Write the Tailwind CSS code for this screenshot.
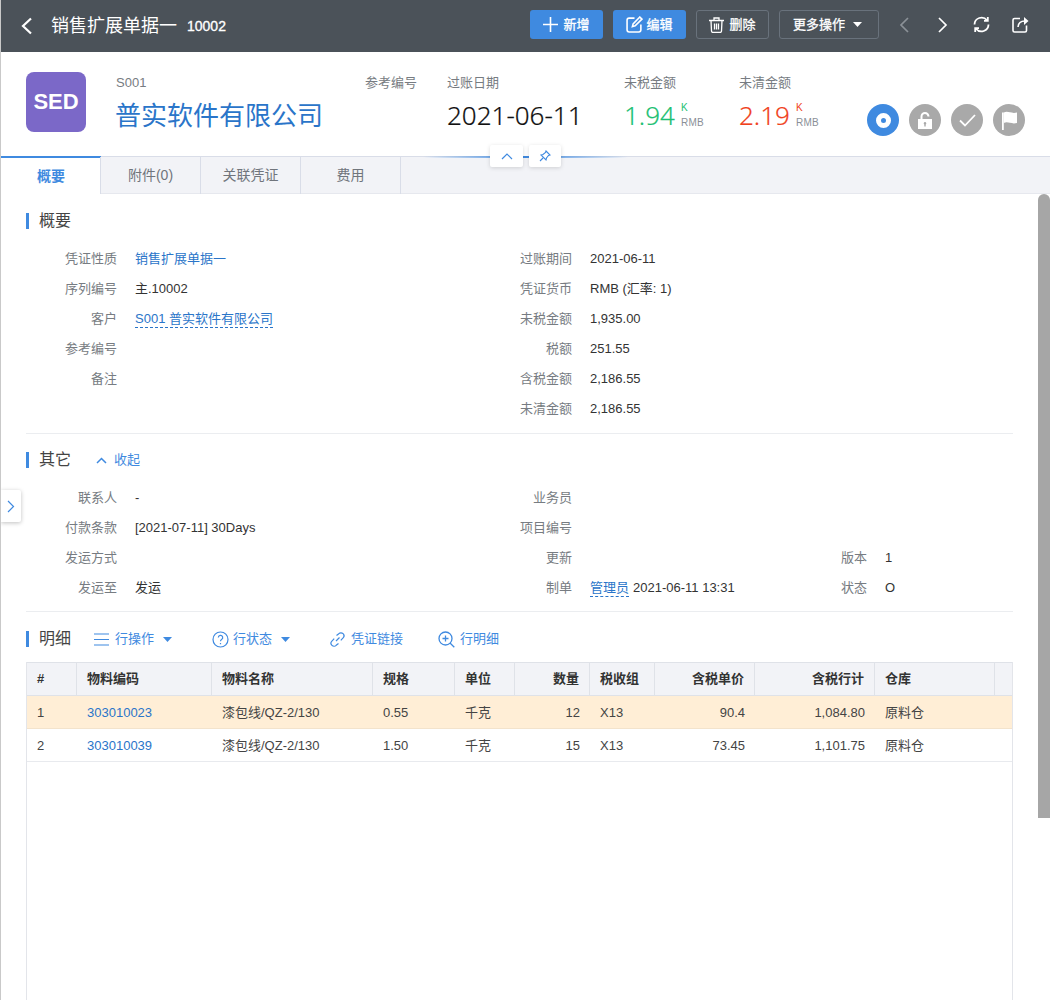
<!DOCTYPE html>
<html lang="zh">
<head>
<meta charset="utf-8">
<script src="https://cdn.jsdelivr.net/npm/@tailwindcss/browser@4"></script>
<title>销售扩展单据一</title>
</head>
<body class="m-0">
<div class="relative w-[1050px] h-[1000px] overflow-hidden bg-white border-l border-[#c9c9c9] text-[13px] text-[#333] font-['Liberation_Sans','Noto_Sans_CJK_SC',sans-serif]">

  <!-- Top bar -->
  <header class="h-[52px] bg-[#4b5259] flex items-center text-white">
    <svg class="ml-[19px] w-[12px] h-[18px]" viewBox="0 0 12 18" fill="none" stroke="#fff" stroke-width="2.200"><path d="M11 1.500 3 9l8 7.500"/></svg>
    <span class="ml-[19px] text-[18px] leading-none">销售扩展单据一</span>
    <span class="ml-[10px] text-[14px] [-webkit-text-stroke:0.3px_white]">10002</span>
    <div class="ml-auto flex items-center pb-[3px]">
      <button class="w-[73px] h-[29px] rounded-[3px] bg-[#3f8ae0] flex items-center justify-center gap-[5px] text-[13px] [-webkit-text-stroke:0.3px_white]">
        <svg class="w-[15px] h-[15px]" viewBox="0 0 15 15" stroke="#fff" stroke-width="1.600"><path d="M7.500 0v15M0 7.500h15"/></svg>新增</button>
      <button class="ml-[10px] w-[73px] h-[29px] rounded-[3px] bg-[#3f8ae0] flex items-center justify-center gap-[3px] text-[13px] [-webkit-text-stroke:0.3px_white]">
        <svg class="w-[17px] h-[17px]" viewBox="0 0 16 16" fill="none" stroke="#fff" stroke-width="1.500"><path d="M8 2H3a2 2 0 0 0-2 2v9a2 2 0 0 0 2 2h9a2 2 0 0 0 2-2V8"/><path d="M6 10l.7-2.600L13 1l2 2-6.400 6.300z"/></svg>编辑</button>
      <button class="ml-[10px] w-[73px] h-[29px] rounded-[3px] border border-[#69727c] flex items-center justify-center gap-[5px] text-[13px] [-webkit-text-stroke:0.3px_white]">
        <svg class="w-[15px] h-[16px]" viewBox="0 0 15 16" fill="none" stroke="#fff" stroke-width="1.300"><path d="M0 3.500h15M5 3.500V1h5v2.500M2 3.500l.5 10.500a1.500 1.500 0 0 0 1.500 1.500h7a1.500 1.500 0 0 0 1.500-1.500L13 3.500M5.500 6.500v6M7.500 6.500v6M9.500 6.500v6"/></svg>删除</button>
      <button class="ml-[10px] w-[100px] h-[29px] rounded-[3px] border border-[#69727c] flex items-center justify-center gap-[8px] pr-[3px] text-[13px] [-webkit-text-stroke:0.3px_white]">更多操作
        <svg class="w-[9px] h-[5px]" viewBox="0 0 9 5" fill="#fff"><path d="M0 0h9L4.500 5z"/></svg></button>
      <svg class="ml-[20px] w-[10px] h-[16px]" viewBox="0 0 10 16" fill="none" stroke="#8b9197" stroke-width="1.700"><path d="M9 1 2 8l7 7"/></svg>
      <svg class="ml-[29px] w-[10px] h-[16px]" viewBox="0 0 10 16" fill="none" stroke="#fff" stroke-width="1.700"><path d="m1 1 7 7-7 7"/></svg>
      <svg class="ml-[25px] w-[17px] h-[17px]" viewBox="0 0 17 17" fill="none" stroke="#fff" stroke-width="1.800"><path d="M1.500 8.500A7 7 0 0 1 14 4.300"/><path d="M15.500 8.500A7 7 0 0 1 3 12.700"/><path d="M14.800 1v3.800H11M2.200 16v-3.800H6"/></svg>
      <svg class="ml-[22px] mr-[21px] w-[17px] h-[17px]" viewBox="0 0 17 17" fill="none" stroke="#fff" stroke-width="1.600"><path d="M8 2.500H2.500a1.500 1.500 0 0 0-1.500 1.500v10.500a1.500 1.500 0 0 0 1.500 1.500h10.500a1.500 1.500 0 0 0 1.500-1.500V9.500"/><path d="M6 11c.3-3.600 3-6 7-6" /><path d="M16.500 5 12 1v8z" fill="#fff" stroke="none"/></svg>
    </div>
  </header>

  <!-- Document summary -->
  <section class="h-[104px] flex items-start">
    <div class="ml-[25px] mt-[20px] w-[60px] h-[60px] rounded-[8px] bg-[#7b68c8] flex items-center justify-center text-white text-[22px] font-bold pb-[2px]">SED</div>
    <div class="ml-[30px] mt-[23px] w-[249px]">
      <div class="text-[13px] leading-[15px] text-[#777c82]">S001</div>
      <div class="-ml-px mt-[8px] text-[26px] leading-[36px] text-[#2a75c9] whitespace-nowrap">普实软件有限公司</div>
    </div>
    <div class="mt-[23px] w-[82px] text-[13px] leading-[15px] text-[#777c82]">参考编号</div>
    <div class="mt-[23px] w-[177px]">
      <div class="text-[13px] leading-[15px] text-[#777c82]">过账日期</div>
      <div class="mt-[7px] text-[26px] leading-[36px] text-[#111] font-['Noto_Sans','Noto_Sans_CJK_SC',sans-serif] font-light [-webkit-text-stroke:0.2px_#111]">2021-06-11</div>
    </div>
    <div class="mt-[23px] w-[115px]">
      <div class="text-[13px] leading-[15px] text-[#777c82]">未税金额</div>
      <div class="mt-[7px] flex items-start">
        <span class="text-[26px] leading-[36px] text-[#1dbf73] font-['Noto_Sans',sans-serif] font-light [-webkit-text-stroke:0.2px_#1dbf73]">1.94</span>
        <span class="ml-[6px] mt-[3px] text-[10px] leading-[15px] text-[#1dbf73]">K<br><span class="text-[#8a9097] tracking-[0.3px]">RMB</span></span>
      </div>
    </div>
    <div class="mt-[23px] w-[128px]">
      <div class="text-[13px] leading-[15px] text-[#777c82]">未清金额</div>
      <div class="mt-[7px] flex items-start">
        <span class="text-[26px] leading-[36px] text-[#f0421c] font-['Noto_Sans',sans-serif] font-light [-webkit-text-stroke:0.2px_#f0421c]">2.19</span>
        <span class="ml-[6px] mt-[3px] text-[10px] leading-[15px] text-[#f0421c]">K<br><span class="text-[#8a9097] tracking-[0.3px]">RMB</span></span>
      </div>
    </div>
    <div class="mt-[52px] flex gap-[10px]">
      <div class="w-[32px] h-[32px] rounded-full bg-[#3f8ae0] flex items-center justify-center"><span class="w-[15px] h-[15px] rounded-full border-[5px] border-white"></span></div>
      <div class="w-[32px] h-[32px] rounded-full bg-[#a9a9a9] flex items-center justify-center">
        <svg class="w-[14px] h-[17px]" viewBox="0 0 14 17" fill="#fff"><path fill-rule="evenodd" d="M0 7h14v10H0zM7 10a1.300 1.300 0 0 0-.7 2.400V14.500h1.400v-2.100A1.300 1.300 0 0 0 7 10z"/><path d="M2.500 7V4.500a4.500 4.500 0 0 1 9 0h-2a2.500 2.500 0 0 0-5 0V7z"/></svg></div>
      <div class="w-[32px] h-[32px] rounded-full bg-[#a9a9a9] flex items-center justify-center">
        <svg class="w-[17px] h-[13px]" viewBox="0 0 17 13" fill="none" stroke="#fff" stroke-width="1.800"><path d="m1 6.500 5 5L16 1"/></svg></div>
      <div class="w-[32px] h-[32px] rounded-full bg-[#a9a9a9] flex items-center justify-center">
        <svg class="w-[17px] h-[19px]" viewBox="0 0 17 19" fill="#fff"><path d="M1 1.500h1.800V19H1z"/><path d="M2.800 1.500C7 -.5 10 3 16 1.500v10.500c-6 1.500-9-2-13.200 0z"/></svg></div>
    </div>
  </section>

  <!-- Tabs -->
  <nav class="h-[38px] bg-[#f2f3f7] border-t border-[#d9dde8] flex text-[14px] text-[#70757c] shadow-[inset_0_-1px_0_#e6e8ee]">
    <div class="w-[100px] -mt-px h-[38px] bg-white border-t-2 border-[#3f8ae0] flex items-center justify-center font-bold text-[#3f8ae0]">概要</div>
    <div class="w-[101px] -ml-px border-r border-l border-[#d9dde8] flex items-center justify-center">附件(0)</div>
    <div class="w-[100px] border-r border-[#d9dde8] flex items-center justify-center">关联凭证</div>
    <div class="w-[100px] border-r border-[#d9dde8] flex items-center justify-center">费用</div>
  </nav>

  <!-- Body -->
  <main class="pl-[25px] w-[1012px]">
    <h2 class="mt-[19px] h-[16px] border-l-[3px] border-[#3f8ae0] pl-[10px] flex items-center text-[16px] font-normal text-[#444]">概要</h2>
    <div class="mt-[15px] grid grid-cols-[455px_1fr] border-b border-[#ebedf0] h-[190px]">
      <div>
        <div class="h-[30px] flex items-center"><span class="w-[91px] text-right text-[#777c82]">凭证性质</span><span class="ml-[18px] text-[#2a75c9]">销售扩展单据一</span></div>
        <div class="h-[30px] flex items-center"><span class="w-[91px] text-right text-[#777c82]">序列编号</span><span class="ml-[18px]">主.10002</span></div>
        <div class="h-[30px] flex items-center"><span class="w-[91px] text-right text-[#777c82]">客户</span><span class="ml-[18px] text-[#2a75c9] border-b border-dashed border-[#2a75c9] leading-[16px]">S001 普实软件有限公司</span></div>
        <div class="h-[30px] flex items-center"><span class="w-[91px] text-right text-[#777c82]">参考编号</span></div>
        <div class="h-[30px] flex items-center"><span class="w-[91px] text-right text-[#777c82]">备注</span></div>
      </div>
      <div>
        <div class="h-[30px] flex items-center"><span class="w-[91px] text-right text-[#777c82]">过账期间</span><span class="ml-[18px]">2021-06-11</span></div>
        <div class="h-[30px] flex items-center"><span class="w-[91px] text-right text-[#777c82]">凭证货币</span><span class="ml-[18px]">RMB (汇率: 1)</span></div>
        <div class="h-[30px] flex items-center"><span class="w-[91px] text-right text-[#777c82]">未税金额</span><span class="ml-[18px]">1,935.00</span></div>
        <div class="h-[30px] flex items-center"><span class="w-[91px] text-right text-[#777c82]">税额</span><span class="ml-[18px]">251.55</span></div>
        <div class="h-[30px] flex items-center"><span class="w-[91px] text-right text-[#777c82]">含税金额</span><span class="ml-[18px]">2,186.55</span></div>
        <div class="h-[30px] flex items-center"><span class="w-[91px] text-right text-[#777c82]">未清金额</span><span class="ml-[18px]">2,186.55</span></div>
      </div>
    </div>

    <div class="mt-[18px] h-[16px] flex items-center">
      <h2 class="border-l-[3px] border-[#3f8ae0] pl-[10px] h-[16px] flex items-center text-[16px] font-normal text-[#444]">其它</h2>
      <svg class="ml-[25px] w-[11px] h-[7px]" viewBox="0 0 11 7" fill="none" stroke="#3f8ae0" stroke-width="1.500"><path d="m1 6 4.500-4.500L10 6"/></svg>
      <span class="ml-[7px] text-[#3f8ae0]">收起</span>
    </div>
    <div class="mt-[15px] grid grid-cols-[455px_295px_1fr] h-[129px] border-b border-[#ebedf0]">
      <div>
        <div class="h-[30px] flex items-center"><span class="w-[91px] text-right text-[#777c82]">联系人</span><span class="ml-[18px]">-</span></div>
        <div class="h-[30px] flex items-center"><span class="w-[91px] text-right text-[#777c82]">付款条款</span><span class="ml-[18px]">[2021-07-11] 30Days</span></div>
        <div class="h-[30px] flex items-center"><span class="w-[91px] text-right text-[#777c82]">发运方式</span></div>
        <div class="h-[30px] flex items-center"><span class="w-[91px] text-right text-[#777c82]">发运至</span><span class="ml-[18px]">发运</span></div>
      </div>
      <div>
        <div class="h-[30px] flex items-center"><span class="w-[91px] text-right text-[#777c82]">业务员</span></div>
        <div class="h-[30px] flex items-center"><span class="w-[91px] text-right text-[#777c82]">项目编号</span></div>
        <div class="h-[30px] flex items-center"><span class="w-[91px] text-right text-[#777c82]">更新</span></div>
        <div class="h-[30px] flex items-center"><span class="w-[91px] text-right text-[#777c82]">制单</span><span class="ml-[18px] text-[#2a75c9] border-b border-dashed border-[#2a75c9] leading-[16px]">管理员</span><span class="ml-[4px]">2021-06-11 13:31</span></div>
      </div>
      <div>
        <div class="h-[60px]"></div>
        <div class="h-[30px] flex items-center"><span class="w-[91px] text-right text-[#777c82]">版本</span><span class="ml-[18px]">1</span></div>
        <div class="h-[30px] flex items-center"><span class="w-[91px] text-right text-[#777c82]">状态</span><span class="ml-[18px]">O</span></div>
      </div>
    </div>

    <div class="mt-[19px] h-[16px] flex items-center text-[#3f8ae0]">
      <h2 class="border-l-[3px] border-[#3f8ae0] pl-[10px] h-[16px] flex items-center text-[16px] font-normal text-[#444]">明细</h2>
      <svg class="ml-[23px] w-[15px] h-[13px]" viewBox="0 0 15 13" stroke="#3f8ae0" stroke-width="1.200"><path d="M0 1h15M0 6.500h15M0 12h15"/></svg>
      <span class="ml-[6px]">行操作</span>
      <svg class="ml-[9px] w-[9px] h-[5px]" viewBox="0 0 9 5" fill="#3f8ae0"><path d="M0 0h9L4.500 5z"/></svg>
      <svg class="ml-[40px] w-[17px] h-[17px]" viewBox="0 0 17 17" fill="none" stroke="#3f8ae0" stroke-width="1.200"><circle cx="8.500" cy="8.500" r="7.500"/><path d="M6.300 6.500a2.200 2.200 0 1 1 3.300 1.900c-.8.500-1.100.9-1.100 1.900M8.500 12v1.300"/></svg>
      <span class="ml-[4px]">行状态</span>
      <svg class="ml-[9px] w-[9px] h-[5px]" viewBox="0 0 9 5" fill="#3f8ae0"><path d="M0 0h9L4.500 5z"/></svg>
      <svg class="ml-[40px] w-[15px] h-[15px]" viewBox="0 0 15 15" fill="none" stroke="#3f8ae0" stroke-width="1.200"><path d="M6 9l3.500-3.500M6.500 3.500 8.800 1.700a2.900 2.900 0 0 1 4.300 4.200l-2.300 2.400M8.500 11.500l-2.300 1.800a2.900 2.900 0 0 1-4.300-4.200l2.300-2.400"/></svg>
      <span class="ml-[6px]">凭证链接</span>
      <svg class="ml-[35px] w-[17px] h-[17px]" viewBox="0 0 17 17" fill="none" stroke="#3f8ae0" stroke-width="1.300"><circle cx="7.500" cy="7.500" r="6.500"/><path d="m12 12 4.300 4.300M7.500 4.500v6M4.500 7.500h6"/></svg>
      <span class="ml-[5px]">行明细</span>
    </div>

    <div class="mt-[15px] w-[987px] h-[340px] border-x border-[#e3e5ea]">
      <div class="grid grid-cols-[50px_135px_161px_82px_60px_75px_65px_100px_120px_120px_1fr] h-[34px] bg-[#f2f3f7] border-y border-[#dfe2e8] shadow-[0_1px_0_#dfe2e8] font-bold text-[#333] items-stretch">
        <div class="flex items-center pl-[10px] border-r border-[#dfe2e8]">#</div>
        <div class="flex items-center pl-[10px] border-r border-[#dfe2e8]">物料编码</div>
        <div class="flex items-center pl-[10px] border-r border-[#dfe2e8]">物料名称</div>
        <div class="flex items-center pl-[10px] border-r border-[#dfe2e8]">规格</div>
        <div class="flex items-center pl-[10px] border-r border-[#dfe2e8]">单位</div>
        <div class="flex items-center justify-end pr-[10px] border-r border-[#dfe2e8]">数量</div>
        <div class="flex items-center pl-[10px] border-r border-[#dfe2e8]">税收组</div>
        <div class="flex items-center justify-end pr-[10px] border-r border-[#dfe2e8]">含税单价</div>
        <div class="flex items-center justify-end pr-[10px] border-r border-[#dfe2e8]">含税行计</div>
        <div class="flex items-center pl-[10px] border-r border-[#dfe2e8]">仓库</div>
        <div></div>
      </div>
      <div class="grid grid-cols-[50px_135px_161px_82px_60px_75px_65px_100px_120px_120px_1fr] h-[33px] bg-[#ffeed6] border-b border-[#f3e3cc] items-center text-[#444] pt-[1px]">
        <div class="pl-[10px]">1</div><div class="pl-[10px] text-[#2a75c9]">303010023</div><div class="pl-[10px]">漆包线/QZ-2/130</div><div class="pl-[10px]">0.55</div><div class="pl-[10px]">千克</div><div class="pr-[10px] text-right">12</div><div class="pl-[10px]">X13</div><div class="pr-[10px] text-right">90.4</div><div class="pr-[10px] text-right">1,084.80</div><div class="pl-[10px]">原料仓</div><div></div>
      </div>
      <div class="grid grid-cols-[50px_135px_161px_82px_60px_75px_65px_100px_120px_120px_1fr] h-[33px] border-b border-[#e8eaee] items-center text-[#444] pt-[1px]">
        <div class="pl-[10px]">2</div><div class="pl-[10px] text-[#2a75c9]">303010039</div><div class="pl-[10px]">漆包线/QZ-2/130</div><div class="pl-[10px]">1.50</div><div class="pl-[10px]">千克</div><div class="pr-[10px] text-right">15</div><div class="pl-[10px]">X13</div><div class="pr-[10px] text-right">73.45</div><div class="pr-[10px] text-right">1,101.75</div><div class="pl-[10px]">原料仓</div><div></div>
      </div>
    </div>
  </main>

  <!-- Overlays -->
  <div class="absolute left-[422px] top-[156px] w-[205px] h-[2px] bg-gradient-to-r from-transparent via-[#3f8ae0] to-transparent"></div>
  <div class="absolute left-[489px] top-[145px] w-[33px] h-[22px] bg-white rounded-[2px] shadow-[0_1px_4px_rgba(0,0,0,0.15)] flex items-center justify-center">
    <svg class="w-[12px] h-[7px]" viewBox="0 0 12 7" fill="none" stroke="#3f8ae0" stroke-width="1.200"><path d="m1 6 5-5 5 5"/></svg>
  </div>
  <div class="absolute left-[528px] top-[145px] w-[32px] h-[22px] bg-white rounded-[2px] shadow-[0_1px_4px_rgba(0,0,0,0.15)] flex items-center justify-center">
    <svg class="w-[12px] h-[12px]" viewBox="0 0 12 12" fill="none" stroke="#3f8ae0" stroke-width="1.100"><path d="M7 1l4 4-1.500.5L7.500 8 7 10 2 5l2-.5L6.500 2.500zM4 8l-3 3"/></svg>
  </div>
  <div class="absolute left-0 top-[490px] w-[20px] h-[32px] bg-white rounded-r-[2px] shadow-[0_1px_4px_rgba(0,0,0,0.25)] flex items-center justify-center">
    <svg class="w-[8px] h-[13px]" viewBox="0 0 8 13" fill="none" stroke="#3f8ae0" stroke-width="1.200"><path d="m1 1 5.500 5.500L1 12"/></svg>
  </div>
  <div class="absolute left-[1037px] top-[194px] w-[12px] h-[624px] bg-[#a6a6a6] rounded-t-[6px]"></div>
</div>
</body>
</html>
